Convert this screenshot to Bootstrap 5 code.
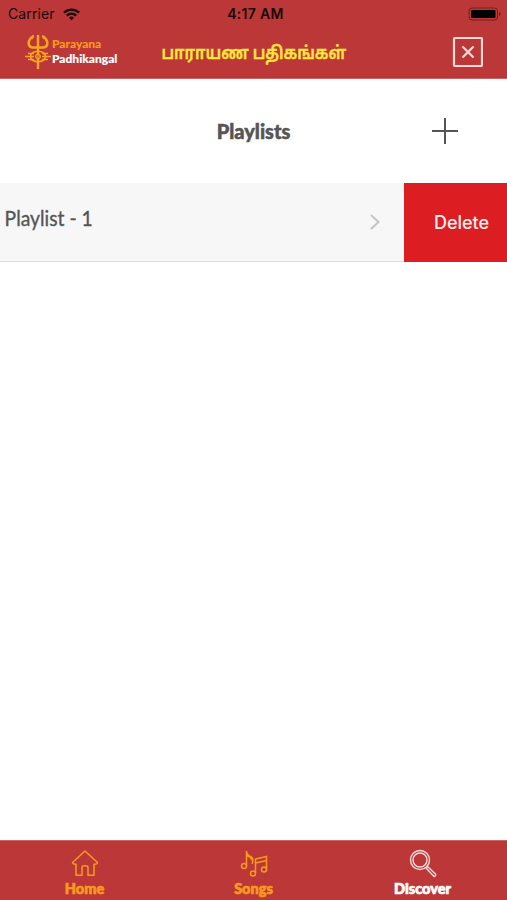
<!DOCTYPE html>
<html lang="en">
<head>
<meta charset="utf-8">
<meta name="viewport" content="width=device-width, initial-scale=1">
<title>Parayana Padhikangal</title>
<link href="https://cdn.jsdelivr.net/npm/bootstrap@5.3.0/dist/css/bootstrap.min.css" rel="stylesheet">
<style>
  body { font-family: Inter, "Liberation Sans", sans-serif; color: #555; overflow: hidden; }
  svg { display: block; fill: none; }
  .brand-bg { background: #bc3838; }
  .status-bar { height: 28px; padding: 0 5px 0 8px; color: #180606; font-size: 14px; line-height: 28px; }
  .status-bar > *, .app-bar > * { flex: 1 1 0; }
  .carrier { letter-spacing: .12px; }
  .clock { font-weight: 600; font-size: 14px; letter-spacing: .3px; padding-left: 1px; }
  .app-bar { height: 51px; padding: 0 24px 3px; border-bottom: 1px solid #cb6464; }
  .futura { font-family: Lato, "Open Sans", sans-serif; font-weight: 900; white-space: nowrap; -webkit-text-stroke: .5px currentColor; }
  .logo-text { font-size: 12px; line-height: 15px; transform: scaleX(1); transform-origin: left; padding: 0 0 2px 1px; -webkit-text-stroke-width: .1px; }
  .amber { color: #f79a1c; }
  .tamil { color: #ffe63c; font-size: 18px; font-weight: 600; font-family: "Noto Sans Tamil", "Noto Sans", sans-serif; white-space: nowrap; line-height: 30px; padding-top: 7px; display: flex; justify-content: center; -webkit-text-stroke: .4px currentColor; }
  .tamil span { transform: scaleX(.865); }
  .heading-row { height: 104px; }
  .heading-text { font-size: 20px; line-height: 24px; }
  .swipe-row { height: 79px; }
  .item-cell { background: #f7f7f7; border-bottom: 1px solid #dcdcdc; }
  .item-name { font-family: Lato, sans-serif; font-size: 21px; line-height: 24px; font-weight: 400; -webkit-text-stroke: .35px #555; padding: 23px 0 0 5px; transform: scaleX(.92); transform-origin: left; }
  .delete-btn { width: 103px; background: #dc1e22; color: #fff0f0; font-weight: 500; font-size: 18px; padding: 6px 0 6px 12px; }
  .tab-bar { height: 60px; border-top: 1px solid #cb6464; }
  .tab-label { font-size: 14.5px; line-height: 18px; padding-top: 1px; -webkit-text-stroke-width: .7px; }
  .tab-item { padding-top: 7px; }
</style>
</head>
<body>
<div class="vh-100 d-flex flex-column bg-white">
  <header class="brand-bg">
    <div class="status-bar d-flex align-items-center">
      <div class="d-flex align-items-center gap-2"><span class="carrier">Carrier</span>
        <svg width="17" height="13" viewBox="0 0 17 13" stroke="#180606" stroke-width="2.3"><path d="M1 4.700a10.800 10.800 0 0 1 15 0M3.800 7.600a6.800 6.800 0 0 1 9.400 0"/><path d="M8.500 12.200 6 9.800a3.600 3.600 0 0 1 5 0Z" fill="#180606" stroke="none"/></svg>
      </div>
      <div class="text-center clock">4:17 AM</div>
      <div class="d-flex justify-content-end">
        <svg width="34" height="14" viewBox="0 0 34 14"><rect x="1" y="1" width="28.5" height="12" rx="3" stroke="#721e1e"/><rect x="3" y="3" width="24.5" height="8" rx="1" fill="#000"/><path d="M31 5v4q1.600-.600 1.600-2T31 5" fill="#721e1e"/></svg>
      </div>
    </div>
    <div class="app-bar d-flex align-items-center">
      <div class="d-flex align-items-center">
        <svg width="27" height="36" viewBox="0 0 27 36" stroke="#f9a51f" class="flex-shrink-0"><path d="M14 1v34" stroke-width="2.400"/><path d="M9.500 2C3 6 3.500 13 8.500 13.500H19.500C24.500 13 25 6 18.500 2" stroke-width="2.600"/><path d="M9.500 1.500 8 5m10.500-3.500L20 5" stroke-width="1.500"/><ellipse cx="14" cy="22.500" rx="7.500" ry="5.300" stroke-width="1.600"/><path d="M1 22.500h9m8 0h9M4 19.500h6m8 0h6M4 25.500h6m8 0h6" stroke-width="1.500"/><circle cx="14" cy="22.500" r="2.500" fill="#e07b25" stroke-width="1"/></svg>
        <div class="futura logo-text"><div class="amber">Parayana</div><div class="text-white">Padhikangal</div></div>
      </div>
      <div class="tamil" lang="ta"><span>பாராயண பதிகங்கள்</span></div>
      <div class="d-flex justify-content-end">
        <svg width="31" height="31" viewBox="0 0 31 31" stroke="#ffd9d5" stroke-width="2.200"><rect x="2" y="2" width="28" height="28" rx="1"/><path d="m10.500 10.500 11 11m0-11-11 11"/></svg>
      </div>
    </div>
  </header>
  <main class="flex-grow-1">
    <div class="heading-row row g-0 align-items-center">
      <div class="col-4 offset-4 text-center"><div class="futura heading-text">Playlists</div></div>
      <div class="col-4 d-flex justify-content-end pe-5"><svg width="28" height="28" viewBox="0 0 28 28" stroke="#555" stroke-width="2"><path d="M14 1v26M1 14h26"/></svg></div>
    </div>
    <div class="swipe-row d-flex">
      <div class="item-cell flex-grow-1 d-flex justify-content-between">
        <div class="item-name">Playlist - 1</div>
        <svg class="align-self-center me-4" width="10" height="16" viewBox="0 0 10 16" stroke="#c4c4c7" stroke-width="2"><path d="m1 1 7.500 7L1 15"/></svg>
      </div>
      <button class="btn rounded-0 border-0 delete-btn">Delete</button>
    </div>
  </main>
  <nav class="tab-bar brand-bg row g-0 text-center">
    <div class="col-4 tab-item amber d-flex flex-column align-items-center">
      <svg width="30" height="31" viewBox="0 0 30 31" stroke="currentColor" stroke-width="1.500" stroke-linejoin="round"><path d="M15 3 2.500 14.500q.300 2 3.500 1.700v11h6v-8q0-1.500 3-1.500t3 1.500v8h6v-11q3.200.300 3.500-1.700Z"/></svg>
      <span class="futura tab-label">Home</span>
    </div>
    <div class="col-4 tab-item amber d-flex flex-column align-items-center">
      <svg width="30" height="31" viewBox="0 0 30 31" stroke="currentColor" stroke-width="1.500"><path d="M7.500 18V3q0 4 5 6 2.500 2 .5 7M7.500 7.500q4 1 6 5M16.500 25V11l11-2.500v12.500M16.500 15l11-2.500"/><circle cx="5" cy="18" r="2.500"/><circle cx="14" cy="25.500" r="2.500"/><circle cx="25" cy="21.500" r="2.500"/></svg>
      <span class="futura tab-label">Songs</span>
    </div>
    <div class="col-4 tab-item text-white d-flex flex-column align-items-center">
      <svg width="30" height="31" viewBox="0 0 30 31" stroke="#ffdcd8" stroke-width="1.400"><circle cx="12" cy="12" r="9.500"/><circle cx="12" cy="12" r="7"/><path d="m18 20 1.500-1.500 8 7.500q.8 2-1.500 2.500Z" stroke-linejoin="round"/></svg>
      <span class="futura tab-label">Discover</span>
    </div>
  </nav>
</div>
<script src="https://cdn.jsdelivr.net/npm/bootstrap@5.3.0/dist/js/bootstrap.bundle.min.js"></script>
</body>
</html>
